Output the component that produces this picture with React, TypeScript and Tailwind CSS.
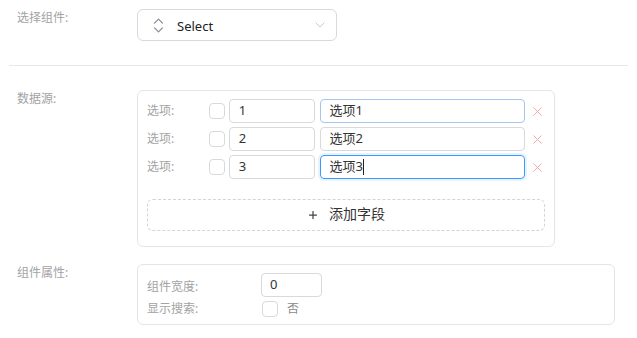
import { ChevronDown, ChevronsUpDown, Plus, X } from 'lucide-react';

const font = { fontFamily: '"Noto Sans", "Noto Sans CJK SC", sans-serif' };

const options = [
	{ value: '1', label: '选项1', state: 'hover' },
	{ value: '2', label: '选项2', state: 'idle' },
	{ value: '3', label: '选项3', state: 'focus' },
];

const Checkbox = () => <span className="block w-4 h-4 shrink-0 rounded-[4px] border border-[#d9d9d9] bg-white" />;

const App = () => {
	return (
		<div className="w-[637px] h-[338px] bg-white px-[9px] pt-[9px] text-[#333]" style={font}>
			{/* 选择组件 */}
			<div className="flex pl-[8px]">
				<div className="w-[120px] text-[12px] leading-[18px] text-[#a3a3a3]">选择组件:</div>
				<div className="w-[200px] h-8 rounded-[6px] border border-[#d9d9d9] flex items-center pl-[11px] pr-[8px]">
					<ChevronsUpDown size={19} color="#8c8c96" strokeWidth={1.6} />
					<span className="ml-[9px] text-[13px] leading-[18px] pt-px text-[#222]">Select</span>
					<ChevronDown className="ml-auto" size={16} color="#bdbdbd" strokeWidth={1.2} />
				</div>
			</div>

			<div className="mt-[24px] h-px bg-[#e8e8e8]" />

			{/* 数据源 */}
			<div className="flex pl-[8px] mt-[24px]">
				<div className="w-[120px] text-[12px] leading-[18px] text-[#a3a3a3]">数据源:</div>
				<div className="w-[418px] rounded-[6px] border border-[#e5e5e5] pt-[8px] pl-[9px] pr-[9px] pb-[15px]">
					<div className="flex flex-col gap-1">
						{options.map((o) => (
							<div key={o.value} className="flex items-center h-6">
								<span className="w-[62px] text-[12px] text-[#a3a3a3]">选项:</span>
								<Checkbox />
								<div className="ml-1 w-[86px] h-6 rounded-[4px] border border-[#d9d9d9] flex items-center px-[9px] text-[13px]">
									{o.value}
								</div>
								<div
									className={`ml-[5px] w-[206px] h-6 rounded-[4px] border flex items-center px-[9px] text-[13px] ${
										o.state === 'focus'
											? 'border-[#4096ff] shadow-[0_0_0_2px_rgba(5,145,255,0.1)]'
											: o.state === 'hover'
												? 'border-[#a6c4ee]'
												: 'border-[#d9d9d9]'
									}`}
								>
									{o.label}
									{o.state === 'focus' && <span className="inline-block w-px h-[16px] bg-[#222]" />}
								</div>
								<X className="ml-[5px]" size={15} color="#f7a8a8" strokeWidth={1.6} />
							</div>
						))}
					</div>
					<button className="mt-5 w-full h-8 rounded-[6px] border border-dashed border-[#d4d4d4] flex items-center justify-center gap-[10px] text-[14px] leading-[20px] text-[#333]">
						<Plus size={12} color="#444" strokeWidth={2.5} />
						<span className="-mt-[2px]">添加字段</span>
					</button>
				</div>
			</div>

			{/* 组件属性 */}
			<div className="flex pl-[8px] mt-[17px]">
				<div className="w-[120px] text-[12px] leading-[18px] text-[#a3a3a3]">组件属性:</div>
				<div className="w-[478px] rounded-[6px] border border-[#e5e5e5] pt-[8px] pl-[9px] pb-[3px]">
					<div className="flex items-center h-6">
						<span className="w-[114px] text-[12px] pt-[3px] text-[#a3a3a3]">组件宽度:</span>
						<div className="w-[61px] h-6 rounded-[4px] border border-[#d9d9d9] flex items-center px-[8px] text-[13px]">0</div>
					</div>
					<div className="flex items-center h-6">
						<span className="w-[115px] text-[12px] text-[#a3a3a3]">显示搜索:</span>
						<Checkbox />
						<span className="ml-[9px] text-[12px] text-[#8a8a8a]">否</span>
					</div>
				</div>
			</div>
		</div>
	);
};

export default App;
